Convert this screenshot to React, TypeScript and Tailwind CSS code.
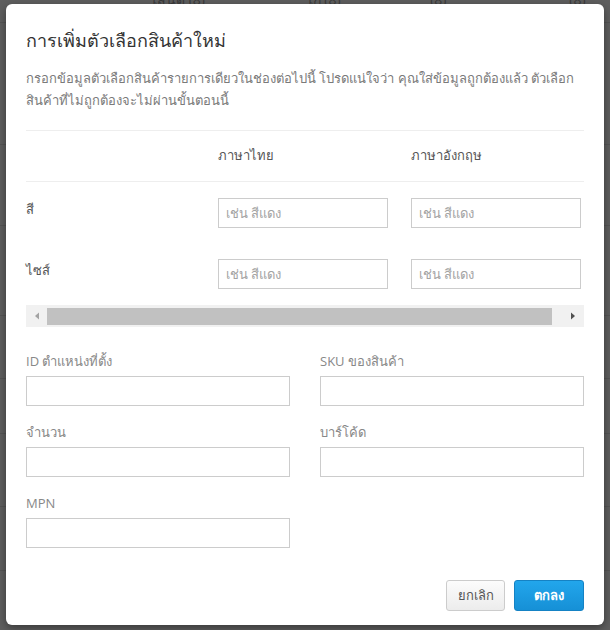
import React from 'react';

const font = { fontFamily: '"Open Sans", "Noto Sans", "DejaVu Sans", sans-serif' };

// faint rows of the page that sits behind the dimmed overlay
const backdropLines = [22, 144, 225, 315, 378, 433, 506, 570];

const TextInput: React.FC<{ placeholder?: string; className?: string }> = ({ placeholder, className }) => (
  <input
    type="text"
    placeholder={placeholder}
    className={`h-[30px] border border-[#cccccc] bg-white px-[7px] text-[13px] text-[#555] outline-none placeholder:text-[#a3a3a3] ${className ?? ''}`}
  />
);

const Field: React.FC<{ label: string }> = ({ label }) => (
  <div className="flex flex-col">
    <label className="text-[13px] leading-[20px] text-[#888]">{label}</label>
    <TextInput className="mt-[5px] w-full" />
  </div>
);

const VariantRow: React.FC<{ label: string }> = ({ label }) => (
  <div className="flex h-[61px] items-start pt-[16px]">
    <div className="w-[192px] pt-[1px] text-[13px] leading-[20px] text-[#555]">{label}</div>
    <TextInput placeholder="เช่น สีแดง" className="w-[170px]" />
    <TextInput placeholder="เช่น สีแดง" className="ml-[23px] w-[170px]" />
  </div>
);

export default function App() {
  return (
    <div className="relative h-[630px] w-[610px] overflow-hidden bg-[#5e5e5e]" style={font}>
      {/* backdrop page */}
      <div className="flex h-[7px] items-end text-[14px] leading-[14px] text-[#3a3a3a]">
        <span className="ml-[150px]">3 ไดไสน์ด (8)</span>
        <span className="ml-[95px]">3 ไดไสม์ไก (8)</span>
        <span className="ml-[60px]">Green (8)</span>
        <span className="ml-[95px]">Silver (8)</span>
      </div>
      {backdropLines.map((y) => (
        <div key={y} className="absolute left-0 right-0 h-px bg-[#545454]" style={{ top: y }} />
      ))}

      {/* modal */}
      <div className="absolute left-[6px] top-[4px] flex h-[621px] w-[598px] flex-col rounded-[6px] bg-white px-[20px] shadow-[0_3px_9px_rgba(0,0,0,0.4)]">
        <h2 className="pt-[23px] text-[18px] leading-[26px] text-[#333]">การเพิ่มตัวเลือกสินค้าใหม่</h2>
        <p className="mt-[14px] text-[13px] leading-[22px] text-[#7a7a7a]">
          กรอกข้อมูลตัวเลือกสินค้ารายการเดียวในช่องต่อไปนี้ โปรดแน่ใจว่า คุณใส่ข้อมูลถูกต้องแล้ว ตัวเลือก
          <br />
          สินค้าที่ไม่ถูกต้องจะไม่ผ่านขั้นตอนนี้
        </p>

        {/* variant table */}
        <div className="mt-[19px] border-t border-[#eeeeee]">
          <div className="flex h-[51px] items-center border-b border-[#eeeeee] text-[13px] text-[#555]">
            <div className="w-[192px]" />
            <div className="w-[193px]">ภาษาไทย</div>
            <div>ภาษาอังกฤษ</div>
          </div>
          <VariantRow label="สี" />
          <VariantRow label="ไซส์" />
          <div className="mt-[1px] flex h-[22px] items-center bg-[#f1f1f1]">
            <svg width="21" height="22" viewBox="0 0 21 22" className="shrink-0">
              <path d="M13 7.5 L9 11 L13 14.5 Z" fill="#a3a3a3" />
            </svg>
            <div className="h-[17px] flex-1 bg-[#c1c1c1]" />
            <svg width="32" height="22" viewBox="0 0 32 22" className="shrink-0">
              <path d="M19 7.5 L23 11 L19 14.5 Z" fill="#505050" />
            </svg>
          </div>
        </div>

        {/* details form */}
        <div className="mt-[24px] grid grid-cols-2 gap-x-[30px] gap-y-[16px]">
          <Field label="ID ตำแหน่งที่ตั้ง" />
          <Field label="SKU ของสินค้า" />
          <Field label="จำนวน" />
          <Field label="บาร์โค้ด" />
          <Field label="MPN" />
        </div>

        <div className="mt-auto mb-[14px] flex justify-end gap-[9px]">
          <button className="h-[31px] w-[59px] rounded-[3px] border border-[#cccccc] bg-gradient-to-b from-[#fcfcfc] to-[#ececec] text-[13px] text-[#555]">
            ยกเลิก
          </button>
          <button className="h-[31px] w-[70px] rounded-[3px] border border-[#1582c4] bg-gradient-to-b from-[#22a6ec] to-[#1690d6] text-[13px] font-bold text-white">
            ตกลง
          </button>
        </div>
      </div>
    </div>
  );
}
